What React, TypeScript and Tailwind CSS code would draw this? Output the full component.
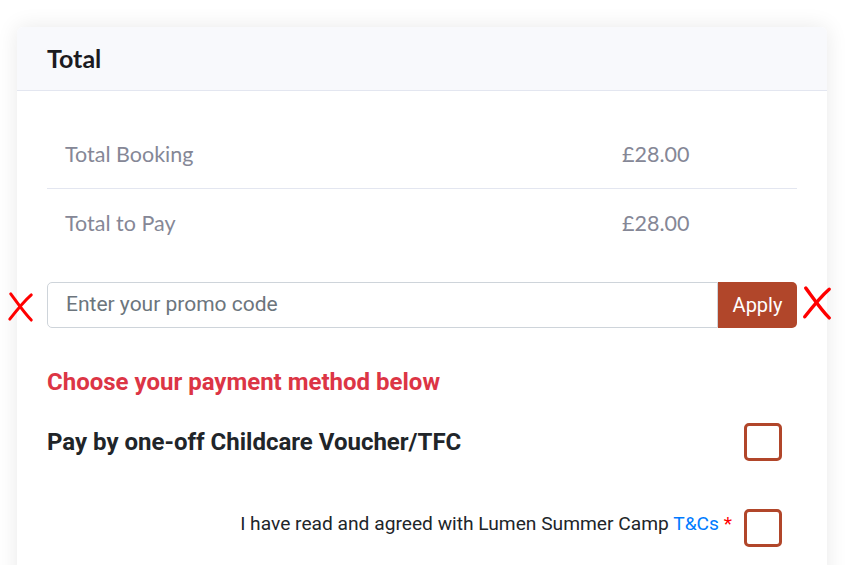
import React from "react";

const XMark = ({ className }: { className: string }) => (
  <svg className={className} viewBox="0 0 30 32" fill="none" stroke="#ff0000" strokeWidth="3.2" strokeLinecap="round">
    <path d="M4 2 C 10 10, 18 22, 26 30" />
    <path d="M26 3 C 18 10, 10 20, 3 29" />
  </svg>
);

const Checkbox = () => (
  <div className="w-[38px] h-[38px] border-[3px] border-[#b1462a] rounded-[5px] bg-white shrink-0" />
);

export default function App() {
  const nunito = { fontFamily: "Lato, 'Noto Sans', sans-serif" };
  return (
    <div className="relative min-h-[565px] bg-white pt-[27px] pl-[17px] overflow-hidden" style={{ fontFamily: "Roboto, 'Liberation Sans', sans-serif" }}>
      <div className="w-[810px] bg-white rounded-t-[6px] shadow-[0_0_22px_rgba(0,0,0,0.09)] min-h-[560px]">
        <div className="h-[64px] bg-[#f8f9fc] border-b border-[#e3e6f0] rounded-t-[6px] px-[30px] flex items-center">
          <span className="text-[25px] font-bold text-[#1b1b1f] leading-none" style={nunito}>Total</span>
        </div>
        <div className="px-[30px] pt-[30px]">
          <div className="text-[21.5px] text-[#858796]" style={nunito}>
            <div className="h-[68px] grid grid-cols-[557px_1fr] items-center px-[18px] border-b border-[#e3e6f0]">
              <span>Total Booking</span>
              <span>£28.00</span>
            </div>
            <div className="h-[68px] grid grid-cols-[557px_1fr] items-center px-[18px]">
              <span>Total to Pay</span>
              <span>£28.00</span>
            </div>
          </div>

          <div className="mt-[25px] flex h-[46px]">
            <div className="flex-1 border border-[#ced4da] rounded-l-[5px] px-[18px] flex items-center text-[21px] text-[#6c757d]">
              Enter your promo code
            </div>
            <div className="w-[79px] bg-[#b1462a] rounded-r-[5px] flex items-center justify-center text-white text-[20px]">
              Apply
            </div>
          </div>

          <div className="mt-[40px] text-[24px] font-bold text-[#dc3545] leading-[28px]">
            Choose your payment method below
          </div>

          <div className="mt-[27px] flex items-center justify-between pr-[15px]">
            <span className="text-[24px] font-bold text-[#212529]">Pay by one-off Childcare Voucher/TFC</span>
            <Checkbox />
          </div>

          <div className="mt-[48px] flex items-center justify-end gap-[12px] pr-[15px]">
            <span className="text-[19.2px] text-[#212529] mb-[8px]">
              I have read and agreed with Lumen Summer Camp <span className="text-[#007bff]">T&amp;Cs</span>{" "}
              <span className="text-[#ff0000]">*</span>
            </span>
            <Checkbox />
          </div>
        </div>
      </div>
      <XMark className="absolute left-[7px] top-[291px] w-[28px] h-[32px]" />
      <XMark className="absolute left-[801px] top-[286px] w-[33px] h-[34px]" />
    </div>
  );
}
